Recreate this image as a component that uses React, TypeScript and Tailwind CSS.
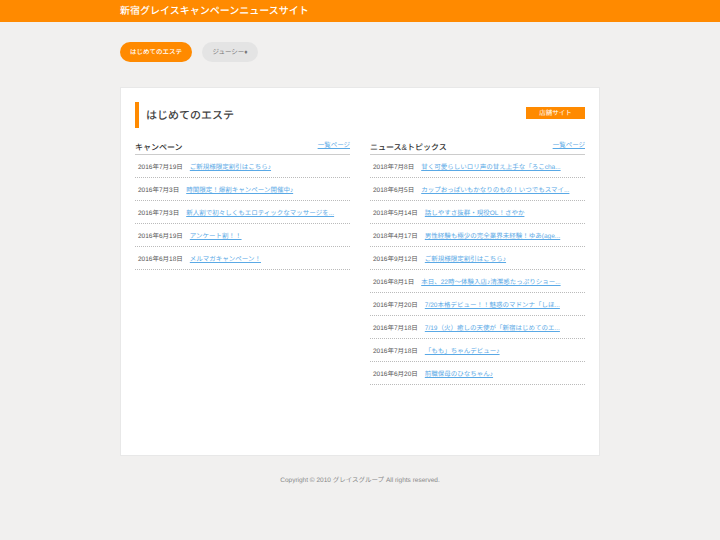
const font = { fontFamily: '"Liberation Sans", "Noto Sans CJK JP", sans-serif' };

const campaign = [
  ["2016年7月19日", "ご新規様限定割引はこちら♪"],
  ["2016年7月3日", "時間限定！爆割キャンペーン開催中♪"],
  ["2016年7月3日", "新人割で初々しくもエロティックなマッサージを..."],
  ["2016年6月19日", "アンケート割！！"],
  ["2016年6月18日", "メルマガキャンペーン！"],
];

const news = [
  ["2018年7月8日", "甘く可愛らしいロリ声の甘え上手な「ろこcha..."],
  ["2018年6月5日", "カップおっぱいもかなりのもの！いつでもスマイ..."],
  ["2018年5月14日", "話しやすさ抜群・現役OL！さやか"],
  ["2018年4月17日", "男性経験も極少の完全業界未経験！ゆあ(age..."],
  ["2016年9月12日", "ご新規様限定割引はこちら♪"],
  ["2016年8月1日", "本日、22時～体験入店♪清潔感たっぷりショー..."],
  ["2016年7月20日", "7/20本格デビュー！！魅惑のマドンナ「しほ..."],
  ["2016年7月18日", "7/19（火）癒しの天使が「新宿はじめてのエ..."],
  ["2016年7月18日", "「もも」ちゃんデビュー♪"],
  ["2016年6月20日", "前職保母のひなちゃん♪"],
];

function Column({ title, items }: { title: string; items: string[][] }) {
  return (
    <section className="w-[215px]">
      <div className="flex h-[17px] items-start justify-between border-b border-[#cccccc]">
        <h3 className="pt-[3px] text-[8px] leading-[13px] font-medium text-[#333333]">{title}</h3>
        <a className="pt-[3px] text-[6.5px] leading-[10px] text-[#5aa9e6] underline">一覧ページ</a>
      </div>
      <ul>
        {items.map(([date, text], i) => (
          <li key={i} className="flex h-[23px] items-center gap-[7px] border-b border-dotted border-[#bbbbbb] pl-[3px] pt-[4px] text-[6.5px] whitespace-nowrap">
            <span className="text-[#555555]">{date}</span>
            <a className="text-[#5aa9e6] underline">{text}</a>
          </li>
        ))}
      </ul>
    </section>
  );
}

export default function App() {
  return (
    <div style={font} className="flex h-[540px] w-[720px] flex-col overflow-hidden bg-[#f1f0ef] [text-rendering:geometricPrecision]">
      <header className="flex h-[22px] shrink-0 items-center bg-[#ff8a00] pl-[120px] pt-[1px] text-[10px] font-medium text-white">
        新宿グレイスキャンペーンニュースサイト
      </header>
      <nav className="ml-[120px] mt-[20px] flex gap-[10px] text-[6.5px]">
        <a className="flex h-[20px] w-[72px] items-center justify-center rounded-full bg-[#ff8a00] pt-[1px] font-medium text-white">はじめてのエステ</a>
        <a className="flex h-[20px] w-[56px] items-center justify-center rounded-full bg-[#e4e4e4] pt-[1px] text-[#777777]">ジューシー♦</a>
      </nav>
      <main className="mx-[120px] mt-[25px] h-[369px] w-[480px] shrink-0 border border-[#e8e8e8] bg-white px-[14px] pt-[14px]">
        <div className="flex items-start justify-between">
          <h2 className="flex h-[26px] items-center border-l-4 border-[#ff8a00] pl-[7px] pt-[2px] text-[11px] font-medium text-[#444444]">はじめてのエステ</h2>
          <a className="mt-[5px] flex h-[12px] w-[59px] items-center justify-center bg-[#ff8a00] pt-[1px] text-[6.5px] text-white">店舗サイト</a>
        </div>
        <div className="mt-[10px] flex justify-between">
          <Column title="キャンペーン" items={campaign} />
          <Column title="ニュース&トピックス" items={news} />
        </div>
      </main>
      <footer className="mt-[20px] text-center text-[6.5px] text-[#888888]">Copyright © 2010 グレイスグループ All rights reserved.</footer>
    </div>
  );
}
